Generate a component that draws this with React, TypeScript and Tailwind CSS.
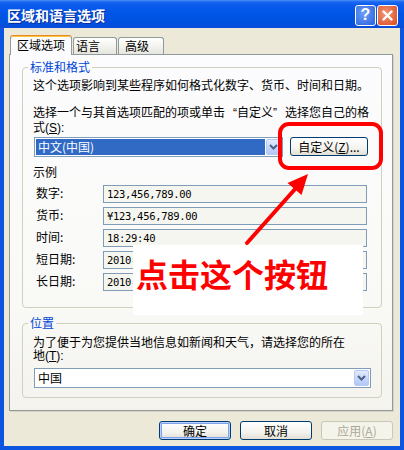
import React from "react";

function Chevron() {
  return (
    <svg width="9" height="6" viewBox="0 0 9 6">
      <path d="M1 1 L4.5 4.5 L8 1" fill="none" stroke="#4D6185" strokeWidth="2" />
    </svg>
  );
}

function DropBtn() {
  return (
    <div className="w-[15px] h-[16px] shrink-0 rounded-[2px] border border-[#B7C9F3] bg-[linear-gradient(to_bottom,#E2EBFE,#C3D5FB_60%,#B2C8F8)] flex items-center justify-center">
      <Chevron />
    </div>
  );
}

function Field({ label, value }: { label: string; value: string }) {
  return (
    <div className="flex items-start h-[18px]">
      <div className="w-[70px] pl-[3px] pt-[1px] leading-[14px] whitespace-nowrap">{label}</div>
      <div className="w-[264px] h-[18px] border border-[#7F9DB9] bg-[#F6F6F1] pl-[3px] flex items-center font-['DejaVu_Sans_Mono',monospace] text-[10.5px] leading-[12px] tracking-[-0.3px] whitespace-nowrap">
        {value}
      </div>
    </div>
  );
}

export default function App() {
  return (
    <div className="relative w-[404px] h-[450px] overflow-hidden bg-[#0B55E0] flex flex-col font-['Noto_Sans_CJK_SC',sans-serif] text-[12px] leading-[14px] text-black">
      {/* title bar */}
      <div className="h-[28px] shrink-0 flex items-center pl-[7px] pr-[6px] bg-[linear-gradient(to_bottom,#4A90F8_0px,#1A66F0_2px,#0A5BEE_5px,#0055E5_14px,#0052E0_22px,#0A4BD8_28px)]">
        <span className="text-white font-bold text-[14px] leading-[16px] pt-[2px] [text-shadow:1px_1px_0_#0A2C9A]">
          区域和语言选项
        </span>
        <div className="ml-auto flex gap-[1px] pt-[2px]">
          <div className="w-[21px] h-[21px] rounded-[3px] border border-white bg-[radial-gradient(circle_at_40%_40%,#6A9DF8,#2A60DC)] flex items-center justify-center text-white font-bold text-[16px] leading-none font-['Liberation_Sans',sans-serif]">
            ?
          </div>
          <div className="w-[21px] h-[21px] rounded-[3px] border border-white bg-[radial-gradient(circle_at_40%_40%,#F29A78,#D8461E)] flex items-center justify-center">
            <svg width="11" height="11" viewBox="0 0 11 11">
              <path d="M1.5 1.5 L9.5 9.5 M9.5 1.5 L1.5 9.5" stroke="white" strokeWidth="2.4" strokeLinecap="round" />
            </svg>
          </div>
        </div>
      </div>

      {/* client */}
      <div className="flex-1 mx-[4px] mb-[4px] bg-[#ECE9D8] flex flex-col pt-[7px] pl-[5px] pr-[7px]">
        {/* tabs */}
        <div className="relative z-10 flex items-end h-[19px] pl-[1px]">
          <div className="w-[62px] h-[20px] -mb-px bg-[#FCFCFE] border-x border-t border-[#919B9C] border-t-[#E68B2C] rounded-t-[3px] shadow-[inset_0_1px_0_#FFC83C] pl-[6px] pt-[2px] leading-[14px] whitespace-nowrap">
            区域选项
          </div>
          <div className="w-[44px] h-[17px] ml-[1px] bg-[linear-gradient(to_bottom,#FFFFFF,#F3F3EF_50%,#E6E5DE)] border-x border-t border-[#919B9C] rounded-t-[3px] pl-[2px] pt-[1px] leading-[14px]">
            语言
          </div>
          <div className="w-[46px] h-[17px] ml-[1px] bg-[linear-gradient(to_bottom,#FFFFFF,#F3F3EF_50%,#E6E5DE)] border-x border-t border-[#919B9C] rounded-t-[3px] pl-[6px] pt-[1px] leading-[14px]">
            高级
          </div>
        </div>

        {/* panel */}
        <div className="h-[357px] shrink-0 border border-[#919B9C] bg-[linear-gradient(to_bottom,#FCFCFE,#F9F9F6_70%,#F4F3EE)] shadow-[1px_1px_0_#D6D3C4] pt-[5px] pl-[12px] pr-[10px]">
          <fieldset className="border border-[#D0D0BF] rounded-[4px]">
            <legend className="ml-[5px] px-[2px] text-[#0046D5] leading-[14px]">标准和格式</legend>
            <div className="pl-[10px] pt-[4px] pb-[16px]">
              <p className="leading-[14px] whitespace-nowrap">这个选项影响到某些程序如何格式化数字、货币、时间和日期。</p>
              <p className="mt-[14px] leading-[15px] whitespace-nowrap font-['Liberation_Sans','Noto_Sans_CJK_SC',sans-serif]">
                选择一个与其首选项匹配的项或单击<span className="pl-[8px]">“</span>自定义<span className="pr-[8px]">”</span>选择您自己的格
                <br />
                式(<span className="underline">S</span>):
              </p>
              <div className="flex items-start mt-[1px]">
                <div className="ml-[1px] w-[249px] h-[20px] border border-[#7F9DB9] bg-white flex p-[1px]">
                  <div className="flex-1 bg-[#316AC5] text-white pl-[2px] leading-[16px] whitespace-nowrap">中文(中国)</div>
                  <div className="ml-[1px]">
                    <DropBtn />
                  </div>
                </div>
                <div className="ml-[7px] w-[78px] h-[19px] border border-[#003C74] rounded-[3px] bg-[linear-gradient(to_bottom,#FFFFFF,#F4F3EE_60%,#E2DFD3)] flex items-center justify-center leading-[14px] whitespace-nowrap">
                  自定义(<span className="underline">Z</span>)...
                </div>
              </div>
              <div className="mt-[8px] leading-[14px]">示例</div>
              <div className="mt-[6px] flex flex-col gap-[4px]">
                <Field label="数字:" value="123,456,789.00" />
                <Field label="货币:" value="¥123,456,789.00" />
                <Field label="时间:" value="18:29:40" />
                <Field label="短日期:" value="2010-" />
                <Field label="长日期:" value="2010-" />
              </div>
            </div>
          </fieldset>

          <fieldset className="mt-[8px] border border-[#D0D0BF] rounded-[4px]">
            <legend className="ml-[5px] px-[2px] text-[#0046D5] leading-[14px]">位置</legend>
            <div className="pl-[10px] pt-[7px] pb-[9px]">
              <p className="leading-[13px] whitespace-nowrap font-['Liberation_Sans','Noto_Sans_CJK_SC',sans-serif]">
                为了便于为您提供当地信息如新闻和天气，请选择您的所在
                <br />
                地(<span className="underline">T</span>):
              </p>
              <div className="mt-[5px] ml-[1px] w-[337px] h-[20px] border border-[#7F9DB9] bg-white flex p-[1px]">
                <div className="flex-1 pl-[2px] leading-[16px]">中国</div>
                <div className="ml-[1px]">
                  <DropBtn />
                </div>
              </div>
            </div>
          </fieldset>
        </div>

        {/* buttons */}
        <div className="mt-[10px] flex justify-end gap-[9px]">
          <div className="w-[72px] h-[19px] border border-[#003C74] rounded-[3px] bg-[linear-gradient(to_bottom,#FFFFFF,#F4F3EE_60%,#E2DFD3)] shadow-[inset_0_0_0_1px_#B9D1FA,inset_0_0_0_2px_#7DA2EE] flex items-center justify-center leading-[14px]">
            确定
          </div>
          <div className="w-[72px] h-[19px] border border-[#003C74] rounded-[3px] bg-[linear-gradient(to_bottom,#FFFFFF,#F4F3EE_60%,#E2DFD3)] flex items-center justify-center leading-[14px]">
            取消
          </div>
          <div className="w-[72px] h-[19px] border border-[#C9C7BA] rounded-[3px] bg-[#F5F4EA] text-[#ACA899] flex items-center justify-center leading-[14px]">
            应用(<span className="underline">A</span>)
          </div>
        </div>
      </div>

      {/* annotation overlays */}
      <div className="absolute left-[133px] top-[245px] w-[230px] h-[70px] bg-white z-20 pl-[3px] pt-[12px]">
        <span className="text-[#FF0000] font-bold text-[32px] leading-[32px] whitespace-nowrap">点击这个按钮</span>
      </div>
      <div className="absolute left-[278px] top-[122px] w-[105px] h-[48px] border-[4px] border-[#FF0000] rounded-[11px] z-30" />
      <svg className="absolute left-0 top-0 z-30 pointer-events-none" width="404" height="450" viewBox="0 0 404 450">
        <line x1="247" y1="243" x2="296" y2="188" stroke="#FF0000" strokeWidth="4" strokeLinecap="round" />
        <polygon points="308,174 301.5,195 287.5,183" fill="#FF0000" />
      </svg>
    </div>
  );
}
